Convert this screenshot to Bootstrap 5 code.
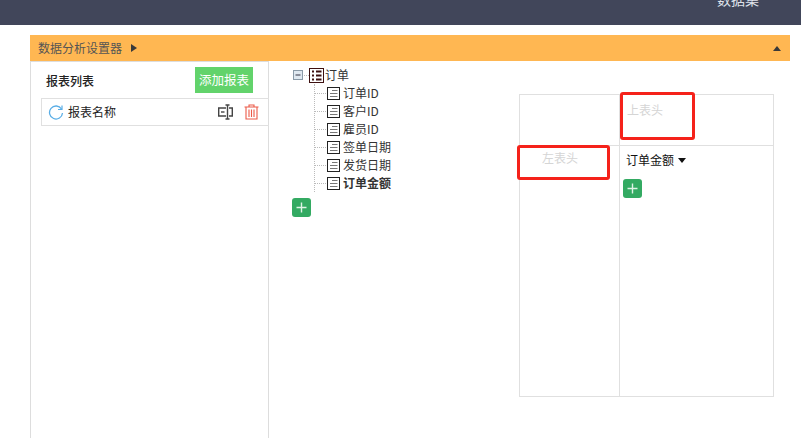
<!DOCTYPE html>
<html lang="zh">
<head>
<meta charset="utf-8">
<title>数据分析设置器</title>
<link rel="stylesheet" href="https://cdn.jsdelivr.net/npm/bootstrap@5.3.0/dist/css/bootstrap.min.css">
<style>
html,body{height:438px;overflow:hidden;background:#fff}
body{font-family:"Microsoft YaHei","Noto Sans CJK SC","Liberation Sans",sans-serif;font-size:12px;color:#333;line-height:1.2}
.topbar{height:25px;background:#41465a;color:#dfe2ea;margin-bottom:10px;overflow:hidden;padding-left:717px}
.topbar span{display:block;margin-top:-9px;font-size:14px;line-height:17px}
.setter{margin-left:30px;width:760px}
.setter-head{height:26px;background:#ffb752;color:#555;padding:0 8px;font-size:12px}
.tri-r{width:0;height:0;border-left:6px solid #393939;border-top:4px solid transparent;border-bottom:4px solid transparent;margin-left:9px}
.tri-u{width:0;height:0;border-bottom:5px solid #393939;border-left:4px solid transparent;border-right:4px solid transparent;margin-right:1px}
.setter-body{height:377px}
.left-pane{width:239px;height:100%;border-left:1px solid #ddd;border-right:1px solid #ddd;border-top:1px solid #ddd;flex:none}
.left-head{height:36px;padding:5px 15px 0 15px;color:#222;font-size:12px}
.add-report{width:58px;height:26px;background:#62d36b;color:#fff;font-size:12.5px;border:0;padding:0;border-radius:0}
.report-row{height:28px;margin-left:10px;margin-right:-1px;border:1px solid #e0e0e0;border-right:0;padding-left:6px;color:#222}
.report-row svg{flex:none}
.tree-pane{width:220px;flex:none;padding:5px 0 0 23px;color:#333;position:relative}
.tree-root{height:18px}
.tree-list{position:relative;margin-left:22px;border-left:1px dotted #bbb;margin-bottom:6px;height:108px}
.tree-item{height:18px;padding-left:12px;position:relative}
.tree-item::before{content:"";width:11px;border-top:1px dotted #bbb;position:absolute;left:0;top:9px}
.doc-ico{margin-right:3px;flex:none}
.plus{width:19px;height:19px;background:#33aa62;border-radius:3px;display:flex;align-items:center;justify-content:center;border:0;padding:0}
.pivot{position:relative;margin-left:30px;margin-top:33px;width:255px;height:303px;border:1px solid #e0e0e0;display:grid;grid-template-columns:100px 1fr;grid-template-rows:51px 1fr;flex:none}
.cell-a{border-right:1px solid #e0e0e0;border-bottom:1px solid #e0e0e0}
.cell-b{border-bottom:1px solid #e0e0e0;padding:8px 7px;color:#d5d5d5}
.cell-c{border-right:1px solid #e0e0e0;padding:5px 0 0 22px;color:#d5d5d5}
.cell-d{padding:7px 3px 0 6px;color:#111}
.tri-d{width:0;height:0;border-top:5px solid #111;border-left:4px solid transparent;border-right:4px solid transparent;margin-left:4px}
.mark-box{position:absolute;border:3px solid #f5221a;border-radius:3px;pointer-events:none}
.mark-top{left:100px;top:-3px;width:75px;height:48px}
.mark-left{left:-3px;top:50px;width:93px;height:35px}
.cell-d .plus{margin-left:-3px;margin-top:12px}
</style>
</head>
<body>
<div class="topbar"><span>数据集</span></div>
<div class="setter">
  <div class="setter-head d-flex align-items-center">
    <span>数据分析设置器</span><span class="tri-r"></span>
    <span class="tri-u ms-auto"></span>
  </div>
  <div class="setter-body d-flex">
    <div class="left-pane">
      <div class="left-head d-flex justify-content-between align-items-start">
        <span class="pt-1 mt-1 fw-medium" style="line-height:12px">报表列表</span>
        <button class="btn add-report" type="button">添加报表</button>
      </div>
      <div class="report-row d-flex align-items-center">
        <svg width="16" height="16" viewBox="0 0 16 16" fill="none" stroke="#5aaee6" stroke-width="1.3"><path d="M13.5 5A6.5 6.5 0 1 0 14.5 9"/><path d="M14 1.5V5.5H10" stroke-width="1.2"/></svg>
        <span class="ms-1">报表名称</span>
        <svg class="ms-auto" width="15" height="16" viewBox="0 0 15 16" fill="none" stroke="#444" stroke-width="1.4"><path d="M8 4H.7V12H8M11 4H14.3V12H11"/><path d="M3 8H6.5"/><path d="M7.5 1H11.5M9.5 1V15M7.5 15H11.5"/></svg>
        <svg style="margin:0 10px 0 11px" width="15" height="16" viewBox="0 0 15 16" fill="none" stroke="#ec5a48" stroke-width="1.1"><path d="M0.5 3H14.5M5 3V1H10V3M2 3V15H13V3M5 5.5V13M7.5 5.5V13M10 5.5V13"/></svg>
      </div>
    </div>
    <div class="tree-pane">
      <div class="tree-root d-flex align-items-center">
        <svg width="11" height="11" viewBox="0 0 11 11" style="margin-left:1px"><rect x=".5" y=".5" width="9" height="9" fill="#dfe8f0" stroke="#8a9aa8"/><path d="M2.5 5H7.5" stroke="#334"/></svg>
        <span style="width:5px;border-top:1px dotted #bbb"></span>
        <svg width="15" height="15" viewBox="0 0 15 15" fill="none" stroke="#3d1010" style="margin-right:1px"><rect x=".5" y=".5" width="14" height="14"/><path d="M3 3.5H5M7 3.5H12.5M3 7.5H5M7 7.5H12.5M3 11.5H5M7 11.5H12.5" stroke-width="2"/></svg>
        <span>订单</span>
      </div>
      <div class="tree-list">
        <div class="tree-item d-flex align-items-center"><svg class="doc-ico" width="13" height="13" viewBox="0 0 13 13" fill="none" stroke="#222"><rect x=".5" y=".5" width="12" height="12"/><path d="M5 3.5H10.5M3 6.5H10.5M3 9.5H10.5" stroke="#777"/></svg><span>订单ID</span></div>
        <div class="tree-item d-flex align-items-center"><svg class="doc-ico" width="13" height="13" viewBox="0 0 13 13" fill="none" stroke="#222"><rect x=".5" y=".5" width="12" height="12"/><path d="M5 3.5H10.5M3 6.5H10.5M3 9.5H10.5" stroke="#777"/></svg><span>客户ID</span></div>
        <div class="tree-item d-flex align-items-center"><svg class="doc-ico" width="13" height="13" viewBox="0 0 13 13" fill="none" stroke="#222"><rect x=".5" y=".5" width="12" height="12"/><path d="M5 3.5H10.5M3 6.5H10.5M3 9.5H10.5" stroke="#777"/></svg><span>雇员ID</span></div>
        <div class="tree-item d-flex align-items-center"><svg class="doc-ico" width="13" height="13" viewBox="0 0 13 13" fill="none" stroke="#222"><rect x=".5" y=".5" width="12" height="12"/><path d="M5 3.5H10.5M3 6.5H10.5M3 9.5H10.5" stroke="#777"/></svg><span>签单日期</span></div>
        <div class="tree-item d-flex align-items-center"><svg class="doc-ico" width="13" height="13" viewBox="0 0 13 13" fill="none" stroke="#222"><rect x=".5" y=".5" width="12" height="12"/><path d="M5 3.5H10.5M3 6.5H10.5M3 9.5H10.5" stroke="#777"/></svg><span>发货日期</span></div>
        <div class="tree-item d-flex align-items-center"><svg class="doc-ico" width="13" height="13" viewBox="0 0 13 13" fill="none" stroke="#222"><rect x=".5" y=".5" width="12" height="12"/><path d="M5 3.5H10.5M3 6.5H10.5M3 9.5H10.5" stroke="#777"/></svg><span class="fw-bold">订单金额</span></div>
      </div>
      <button class="plus" type="button" aria-label="添加"><svg width="11" height="11" viewBox="0 0 11 11"><path d="M5.5 0.5V10.5M0.5 5.5H10.5" stroke="#dff3e6" stroke-width="1.4"/></svg></button>
    </div>
    <div class="pivot">
      <div class="cell-a"></div>
      <div class="cell-b">上表头</div>
      <div class="cell-c">左表头</div>
      <div class="cell-d">
        <div class="d-flex align-items-center"><span>订单金额</span><span class="tri-d"></span></div>
        <button class="plus" type="button" aria-label="添加"><svg width="11" height="11" viewBox="0 0 11 11"><path d="M5.5 0.5V10.5M0.5 5.5H10.5" stroke="#dff3e6" stroke-width="1.4"/></svg></button>
      </div>
      <div class="mark-box mark-top"></div>
      <div class="mark-box mark-left"></div>
    </div>
  </div>
</div>
<script src="https://cdn.jsdelivr.net/npm/bootstrap@5.3.0/dist/js/bootstrap.bundle.min.js"></script>
</body>
</html>
